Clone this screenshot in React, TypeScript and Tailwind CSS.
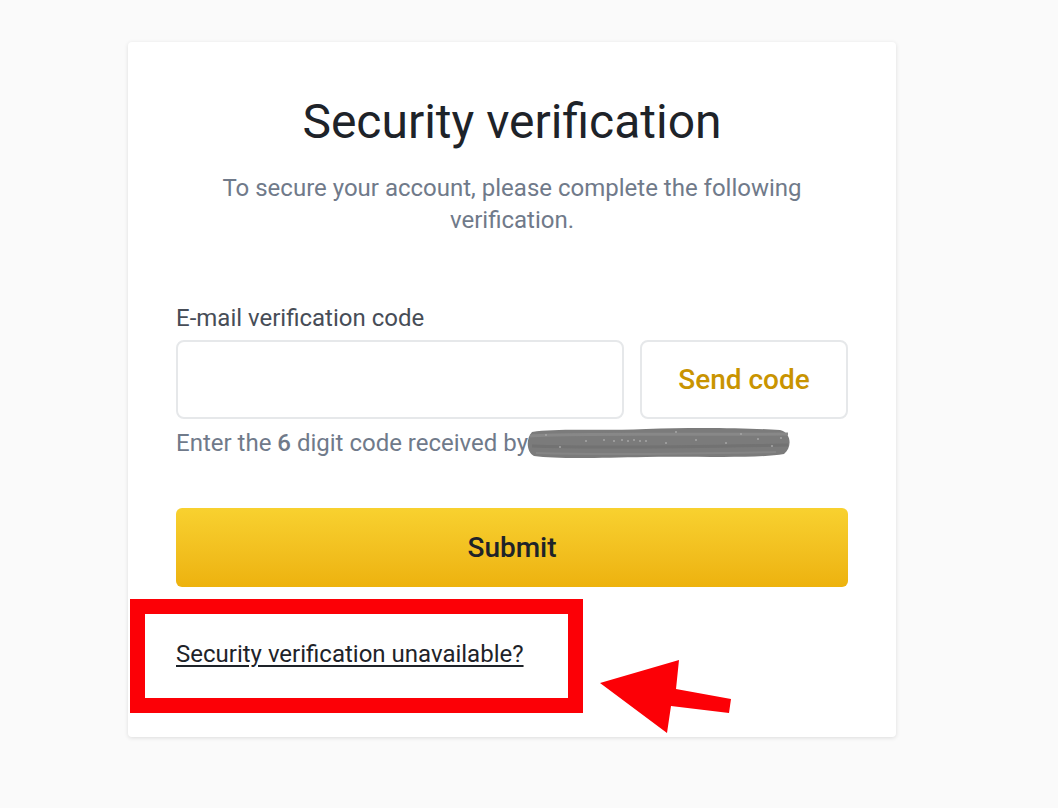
import React from "react";

function Scribble() {
  return (
    <svg width="266" height="34" viewBox="0 0 266 34" className="block -ml-[2px]">
      <path
        d="M6 6 C 30 2, 70 5, 120 3 C 170 1, 220 2, 254 4 C 266 7, 266 22, 258 28 C 230 33, 170 30, 120 31 C 70 32, 30 33, 8 30 C 0 26, 0 12, 6 6 Z"
        fill="#7b7b7b"
      />
      <path d="M4 10 C 40 7, 120 9, 262 8" stroke="#888" strokeWidth="3" fill="none" />
      <path d="M6 20 C 60 22, 150 21, 262 19" stroke="#727272" strokeWidth="3" fill="none" />
      <path d="M10 27 C 70 29, 160 28, 250 26" stroke="#858585" strokeWidth="2" fill="none" />
      <g fill="#a6a6a6">
        <circle cx="20" cy="9" r="1" />
        <circle cx="60" cy="15" r="1" />
        <circle cx="78" cy="14" r="1" />
        <circle cx="88" cy="15" r="1" />
        <circle cx="96" cy="14" r="1" />
        <circle cx="102" cy="15" r="1" />
        <circle cx="108" cy="14" r="1" />
        <circle cx="114" cy="15" r="1" />
        <circle cx="120" cy="15" r="1" />
        <circle cx="140" cy="17" r="1" />
        <circle cx="170" cy="14" r="1" />
        <circle cx="200" cy="17" r="1" />
        <circle cx="215" cy="8" r="1" />
        <circle cx="232" cy="13" r="1" />
        <circle cx="246" cy="20" r="1" />
        <circle cx="255" cy="12" r="1" />
        <circle cx="34" cy="21" r="1" />
        <circle cx="150" cy="6" r="1" />
      </g>
    </svg>
  );
}

export default function App() {
  return (
    <div
      className="min-h-[808px] w-full bg-[#fafafa] pt-[42px] pl-[128px]"
      style={{ fontFamily: "Roboto, 'Liberation Sans', sans-serif" }}
    >
      <div className="relative w-[768px] rounded-[4px] bg-white px-[48px] pt-[52px] pb-[68px] shadow-[0_1px_4px_rgba(0,0,0,0.12)]">
        <h1 className="text-center text-[48px] leading-[56px] font-normal text-[#1e2329]">
          Security verification
        </h1>
        <p className="mx-auto mt-[22px] w-[600px] text-center text-[24px] leading-[32px] text-[#707a8a]">
          To secure your account, please complete the following verification.
        </p>

        <div className="mt-[67px] text-[24px] leading-[30px] text-[#474d57]">
          E-mail verification code
        </div>
        <div className="mt-[7px] flex gap-[16px]">
          <div className="h-[79px] flex-1 rounded-[8px] border-2 border-[#e6e8ea]" />
          <button className="flex h-[79px] w-[208px] items-center justify-center rounded-[8px] border-2 border-[#e6e8ea] bg-white text-[28px] font-medium text-[#c99400]">
            Send code
          </button>
        </div>
        <div className="mt-[7px] flex h-[34px] items-center text-[24px] text-[#707a8a]">
          <span>
            Enter the <span className="font-medium">6</span> digit code received by
          </span>
          <Scribble />
        </div>

        <button className="mt-[48px] flex h-[79px] w-full items-center justify-center rounded-[6px] bg-gradient-to-b from-[#f8d12f] to-[#edb20d] text-[28px] font-medium text-[#1e2329]">
          Submit
        </button>

        <div className="mt-[52px] text-[24px] leading-[30px] text-[#1e2329]">
          <span className="underline underline-offset-[3px]">Security verification unavailable?</span>
        </div>

        <div className="pointer-events-none absolute left-[2px] top-[557px] h-[114px] w-[453px] border-[15px] border-[#fc0006]" />
        <svg
          className="pointer-events-none absolute left-[472px] top-[618px]"
          width="140"
          height="80"
          viewBox="472 618 140 80"
        >
          <polygon
            points="472,641 551,618 548,647 603,657 601,671 543,664 539,691"
            fill="#fc0006"
          />
        </svg>
      </div>
    </div>
  );
}
